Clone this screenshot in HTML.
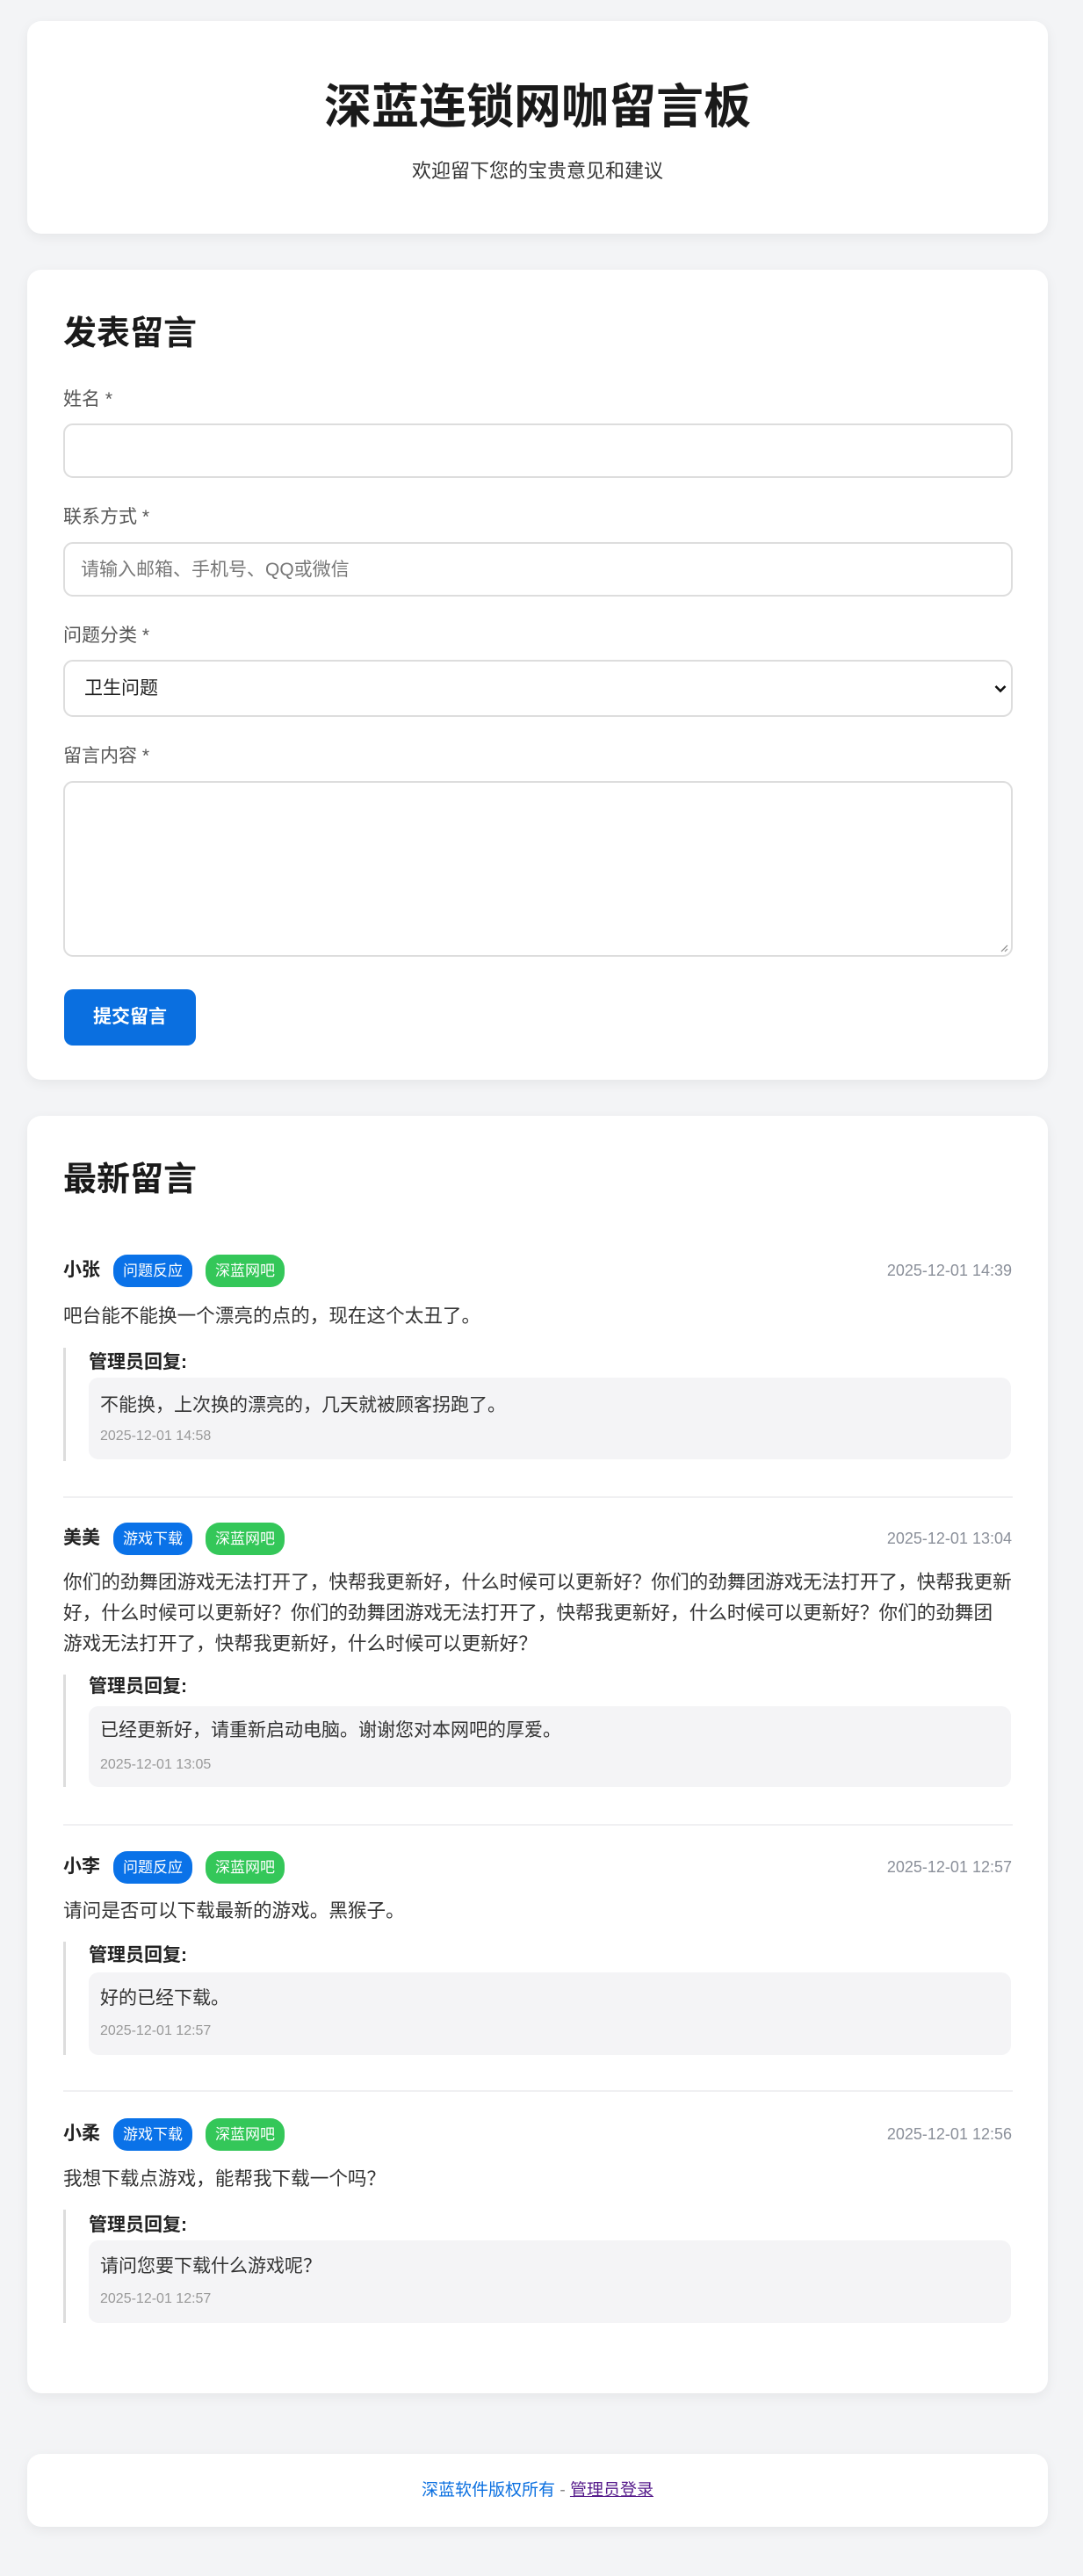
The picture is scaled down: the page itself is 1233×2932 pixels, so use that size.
<!DOCTYPE html>
<html><head><meta charset="utf-8">
<style>
*{box-sizing:border-box;margin:0;padding:0}
html,body{width:1233px;height:2932px;background:#f3f4f6;overflow:hidden}
body{position:relative;font-family:"Liberation Sans","Noto Sans CJK SC",sans-serif;color:#222}
.card{position:absolute;left:31px;width:1162px;background:#fff;border-radius:16px;box-shadow:0 4px 14px rgba(0,0,0,0.06)}
.a{position:absolute;white-space:nowrap}
.lbl{left:41px;font-size:21px;color:#555;line-height:30px}
.inp{position:absolute;left:41px;width:1081px;border:2px solid #ddd;border-radius:11px;background:#fff}
.tag{position:absolute;height:37px;line-height:37px;border-radius:16px;color:#fff;font-size:17px;padding:0 11px}
.blue{background:#0a72e8}.green{background:#34c759}
.name{left:41px;font-weight:bold;font-size:21px;line-height:30px}
.date{right:41px;font-size:18px;color:#8a8f99;line-height:30px}
.body{left:41px;font-size:21.6px;color:#333;line-height:35px}
.rb{position:absolute;left:41px;width:3px;background:#ddd}
.rh{left:70px;font-size:21px;font-weight:bold;line-height:30px}
.box{position:absolute;left:70px;width:1050px;background:#f4f4f6;border-radius:11px}
.rt{left:83px;font-size:21px;color:#333;line-height:30px}
.rd{left:83px;font-size:16px;color:#999;line-height:24px}
.sep{position:absolute;left:41px;width:1081px;height:2px;background:#f0f0f2}
</style></head><body>

<div class="card" style="top:24px;height:242px">
  <div class="a" style="left:0;width:1162px;text-align:center;top:66px;font-size:54px;font-weight:bold;line-height:64px;color:#1a1a1a">深蓝连锁网咖留言板</div>
  <div class="a" style="left:0;width:1162px;text-align:center;top:156px;font-size:22px;line-height:30px;color:#333">欢迎留下您的宝贵意见和建议</div>
</div>

<div class="card" style="top:307px;height:922px">
  <div class="a" style="left:41px;top:50px;font-size:38px;font-weight:bold;line-height:46px;color:#1a1a1a">发表留言</div>
  <div class="a lbl" style="top:133px">姓名 *</div>
  <div class="inp" style="top:175px;height:62px"></div>
  <div class="a lbl" style="top:267px">联系方式 *</div>
  <div class="inp" style="top:310px;height:62px"><span class="a" style="left:18px;top:15px;font-size:21px;color:#777;line-height:30px">请输入邮箱、手机号、QQ或微信</span></div>
  <div class="a lbl" style="top:402px">问题分类 *</div>
  <div class="inp" style="top:444px;height:65px"><span class="a" style="left:22px;top:16px;font-size:21px;color:#222;line-height:30px">卫生问题</span>
    <svg style="position:absolute;left:1058px;top:26px" width="14" height="10" viewBox="0 0 14 10"><path d="M1.5 2 L7 7.5 L12.5 2" stroke="#111" stroke-width="2.6" fill="none"/></svg></div>
  <div class="a lbl" style="top:539px">留言内容 *</div>
  <div class="inp" style="top:582px;height:200px">
    <svg style="position:absolute;right:3px;bottom:3px" width="10" height="10" viewBox="0 0 10 10"><path d="M9 2 L2 9 M9 6 L6 9" stroke="#888" stroke-width="1.2"/></svg></div>
  <div class="a" style="left:42px;top:819px;width:150px;height:64px;background:#0a6fe0;border-radius:10px;color:#fff;font-weight:bold;font-size:21px;line-height:64px;text-align:center">提交留言</div>
</div>

<div class="card" style="top:1270px;height:1454px">
  <div class="a" style="left:41px;top:50px;font-size:38px;font-weight:bold;line-height:46px;color:#1a1a1a">最新留言</div>

  <div class="a name" style="top:161px">小张</div>
  <div class="tag blue" style="left:98px;top:158px">问题反应</div>
  <div class="tag green" style="left:203px;top:158px">深蓝网吧</div>
  <div class="a date" style="top:161px">2025-12-01 14:39</div>
  <div class="a body" style="top:210px">吧台能不能换一个漂亮的点的，现在这个太丑了。</div>
  <div class="rb" style="top:264px;height:129px"></div>
  <div class="a rh" style="top:266px">管理员回复:</div>
  <div class="box" style="top:298px;height:93px"></div>
  <div class="a rt" style="top:315px">不能换，上次换的漂亮的，几天就被顾客拐跑了。</div>
  <div class="a rd" style="top:353px">2025-12-01 14:58</div>
  <div class="sep" style="top:433px"></div>

  <div class="a name" style="top:466px">美美</div>
  <div class="tag blue" style="left:98px;top:463px">游戏下载</div>
  <div class="tag green" style="left:203px;top:463px">深蓝网吧</div>
  <div class="a date" style="top:466px">2025-12-01 13:04</div>
  <div class="a body" style="top:513px">你们的劲舞团游戏无法打开了，快帮我更新好，什么时候可以更新好？你们的劲舞团游戏无法打开了，快帮我更新<br>好，什么时候可以更新好？你们的劲舞团游戏无法打开了，快帮我更新好，什么时候可以更新好？你们的劲舞团<br>游戏无法打开了，快帮我更新好，什么时候可以更新好？</div>
  <div class="rb" style="top:636px;height:128px"></div>
  <div class="a rh" style="top:635px">管理员回复:</div>
  <div class="box" style="top:672px;height:92px"></div>
  <div class="a rt" style="top:685px">已经更新好，请重新启动电脑。谢谢您对本网吧的厚爱。</div>
  <div class="a rd" style="top:727px">2025-12-01 13:05</div>
  <div class="sep" style="top:806px"></div>

  <div class="a name" style="top:840px">小李</div>
  <div class="tag blue" style="left:98px;top:837px">问题反应</div>
  <div class="tag green" style="left:203px;top:837px">深蓝网吧</div>
  <div class="a date" style="top:840px">2025-12-01 12:57</div>
  <div class="a body" style="top:887px">请问是否可以下载最新的游戏。黑猴子。</div>
  <div class="rb" style="top:940px;height:129px"></div>
  <div class="a rh" style="top:941px">管理员回复:</div>
  <div class="box" style="top:975px;height:94px"></div>
  <div class="a rt" style="top:990px">好的已经下载。</div>
  <div class="a rd" style="top:1030px">2025-12-01 12:57</div>
  <div class="sep" style="top:1109px"></div>

  <div class="a name" style="top:1144px">小柔</div>
  <div class="tag blue" style="left:98px;top:1141px">游戏下载</div>
  <div class="tag green" style="left:203px;top:1141px">深蓝网吧</div>
  <div class="a date" style="top:1144px">2025-12-01 12:56</div>
  <div class="a body" style="top:1192px">我想下载点游戏，能帮我下载一个吗？</div>
  <div class="rb" style="top:1245px;height:129px"></div>
  <div class="a rh" style="top:1248px">管理员回复:</div>
  <div class="box" style="top:1280px;height:94px"></div>
  <div class="a rt" style="top:1295px">请问您要下载什么游戏呢？</div>
  <div class="a rd" style="top:1335px">2025-12-01 12:57</div>
</div>

<div class="card" style="top:2793px;height:83px">
  <div class="a" style="left:0;width:1162px;text-align:center;top:27px;font-size:19px;line-height:30px;color:#0a6fe0">深蓝软件版权所有 <span style="color:#888">-</span> <span style="color:#551a8b;text-decoration:underline">管理员登录</span></div>
</div>
</body></html>
